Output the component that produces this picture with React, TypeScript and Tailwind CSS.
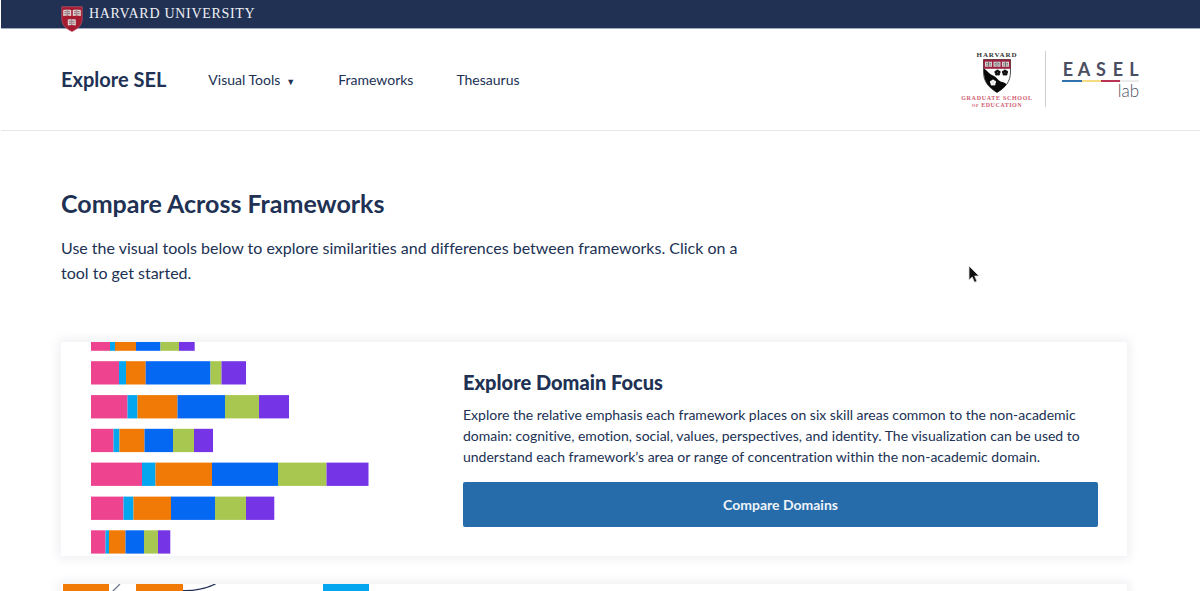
type Bar = { y: number; edges: number[] };

const SEGMENT_COLORS = ["#ee438f", "#05a6f0", "#f07a05", "#0568f3", "#a8c750", "#7535e6"];

const BARS: Bar[] = [
  { y: -14.5, edges: [30, 49, 54, 75, 99.5, 118, 133.7] },
  { y: 19.2, edges: [30, 58, 65, 84.7, 149.5, 160.5, 185] },
  { y: 53.1, edges: [30, 66.5, 76.5, 116.5, 164, 198, 228] },
  { y: 86.8, edges: [30, 52.5, 58.5, 83.5, 112, 133, 152] },
  { y: 120.6, edges: [30, 81, 94.5, 151, 217, 265.5, 307.5] },
  { y: 154.6, edges: [30, 62.5, 72.5, 110, 154, 185, 213.3] },
  { y: 188.3, edges: [30, 44.5, 48, 64.5, 83, 97, 109.3] },
];

function Shield() {
  return (
    <svg viewBox="0 0 22 26" className="h-[26px] w-[22px]" aria-hidden="true">
      <path d="M.8.8h20.4v12c0 6.500-4.500 10-10.200 12.800C5.300 22.800.8 19.300.8 12.800Z" fill="#a51c30" stroke="#c5566a" strokeWidth=".7" />
      {[[2.2, 3.5], [11.8, 3.5], [6.8, 13]].map(([x, y]) => (
        <g key={`${x}-${y}`} transform={`translate(${x} ${y})`}>
          <path d="M0 .5 4 0 8 .5v6L4 6 0 6.500Z" fill="#ddd3d5" />
          <path d="M1.200 2.200h2M1.200 4.200h2M4.800 2.200h2M4.800 4.200h2M4 0v6" stroke="#6b3942" strokeWidth=".7" />
        </g>
      ))}
    </svg>
  );
}

function Cinquefoil({ x, y, fill }: { x: number; y: number; fill: string }) {
  return (
    <g transform={`translate(${x} ${y})`} fill={fill}>
      <circle cx="0" cy="-1.600" r="1.500" />
      <circle cx="1.600" cy="-.4" r="1.500" />
      <circle cx="1" cy="1.400" r="1.500" />
      <circle cx="-1" cy="1.400" r="1.500" />
      <circle cx="-1.600" cy="-.4" r="1.500" />
    </g>
  );
}

function GraduateSchoolLogo() {
  return (
    <svg viewBox="0 0 72 60" className="h-[60px] w-[72px]" role="img" aria-label="Harvard Graduate School of Education">
      <text x="36" y="8" textAnchor="middle" fontFamily="Liberation Serif, serif" fontWeight="700" fontSize="7" letterSpacing=".9" fill="#333">HARVARD</text>
      <path d="M22.500 10.500h27V23c0 10-5.500 15.500-13.500 20.500C28 38.500 22.500 33 22.500 23Z" fill="#fff" stroke="#222" strokeWidth=".8" />
      <path d="M22.900 19.500C27 22 28 25 32 26.500S37 32 41 33s4 2 4.300 2.700c-2.300 3.300-5.500 5.600-9.300 7.800C28 38.500 22.900 33 22.900 23Z" fill="#080808" />
      <path d="M22.500 10.500h27v9.300h-27Z" fill="#9b2340" />
      {[24, 32.5, 41].map((x) => (
        <g key={x}>
          <path d={`M${x} 12.700h7v5h-7Z`} fill="#ddd6d8" />
          <path d={`M${x + 3.5} 12.700v5M${x + 1} 14.300h1.600M${x + 1} 16h1.600M${x + 4.5} 14.300h1.600M${x + 4.5} 16h1.600`} stroke="#444" strokeWidth=".7" />
        </g>
      ))}
      <Cinquefoil x={36.5} y={23.5} fill="#111" />
      <Cinquefoil x={44} y={23.5} fill="#111" />
      <Cinquefoil x={32} y={33.5} fill="#f1f1f1" />
      <text x="36" y="51" textAnchor="middle" fontFamily="Liberation Serif, serif" fontWeight="700" fontSize="6" letterSpacing=".7" fill="#cf5b70">GRADUATE SCHOOL</text>
      <text x="36" y="58" textAnchor="middle" fontFamily="Liberation Serif, serif" fontWeight="700" fontSize="6" letterSpacing=".5" fill="#cf5b70"><tspan fontSize="4.500">OF</tspan> EDUCATION</text>
    </svg>
  );
}

function EaselLogo() {
  return (
    <svg viewBox="0 0 78 48" className="h-12 w-[78px]" role="img" aria-label="EASEL lab">
      <g fontFamily="Lato, sans-serif" fontWeight="700" fontSize="18" fill="#4a4e61" textAnchor="middle">
        <text x="6" y="21">E</text>
        <text x="22" y="21">A</text>
        <text x="39" y="21">S</text>
        <text x="56" y="21">E</text>
        <text x="72" y="21">L</text>
      </g>
      <path d="M0 26h20" stroke="#2f70ae" strokeWidth="2" />
      <path d="M20 26h19" stroke="#f5dc82" strokeWidth="2" />
      <path d="M39 26h19" stroke="#b93352" strokeWidth="2" />
      <path d="M58 26h19" stroke="#e6e6e6" strokeWidth="1.500" />
      <text x="77" y="42" textAnchor="end" fontFamily="Lato, sans-serif" fontWeight="300" fontSize="17" fill="#4a4e61">lab</text>
    </svg>
  );
}

function DomainChart() {
  return (
    <svg viewBox="0 0 373 214" className="h-[214px] w-[373px] shrink-0" role="img" aria-label="Stacked bars of framework domains">
      {BARS.map((bar) => (
        <g key={bar.y}>
          {SEGMENT_COLORS.map((color, i) => (
            <rect key={color} x={bar.edges[i]} y={bar.y} width={bar.edges[i + 1] - bar.edges[i]} height="23.300" fill={color} />
          ))}
        </g>
      ))}
    </svg>
  );
}

function ConnectionsChart() {
  return (
    <svg viewBox="0 0 373 214" className="h-[214px] w-[373px] shrink-0" role="img" aria-label="Connected skills">
      <path d="M2 0h46v24H2ZM75 0h47v24H75Z" fill="#f07a05" />
      <path d="M262 0h46v24h-46Z" fill="#05a6f0" />
      <path d="M51 8 59 0" stroke="#6e7788" strokeWidth="1.300" />
      <path d="M122 6.700Q140 7 154.500 0" fill="none" stroke="#1f2d52" strokeWidth="1.300" />
    </svg>
  );
}

function Pointer() {
  return (
    <svg viewBox="0 0 12 19" className="absolute top-[265px] left-[968px] h-[19px] w-3" aria-hidden="true">
      <path d="M1 1v14l3.200-3 2.300 5.300 2.400-1L6.700 11H11Z" fill="#111" stroke="#ddd" strokeWidth=".8" />
    </svg>
  );
}

export default function App() {
  return (
    <div className="relative h-screen overflow-hidden bg-white font-['Lato',sans-serif] text-[#203154] [font-variant-ligatures:none]">
      <div className="ml-px h-7 bg-[#203154] px-[60px] shadow-[0_1px_0_#a3abc0]">
        <a href="#harvard" className="flex w-fit items-start gap-[6px] pt-[6px]">
          <Shield />
          <span className="font-['Liberation_Serif',serif] text-[14px] leading-4 tracking-wider text-[#eef0f4]">HARVARD UNIVERSITY</span>
        </a>
      </div>
      <header className="ml-px flex h-[103px] items-center justify-between border-b border-[#e4e6e8] px-[60px]">
        <div className="flex items-center">
          <a href="#home" className="text-[20px] leading-7 font-bold">Explore SEL</a>
          <nav className="ml-[42px] flex items-center gap-[43px] pt-[2px] text-[14px] leading-6">
            <button type="button" className="flex items-center gap-[6px]">
              Visual Tools <span className="pt-[3px] text-[9px] leading-4">▼</span>
            </button>
            <a href="#frameworks">Frameworks</a>
            <a href="#thesaurus">Thesaurus</a>
          </nav>
        </div>
        <div className="flex items-center">
          <a href="#gse"><GraduateSchoolLogo /></a>
          <div className="mr-4 ml-3 h-14 w-px bg-[#cdcfd3]" />
          <a href="#easel"><EaselLogo /></a>
        </div>
      </header>
      <main className="pr-[73px] pl-[61px]">
        <h1 className="pt-[54px] text-[25px] leading-9 font-bold">Compare Across Frameworks</h1>
        <p className="mt-[14px] max-w-[680px] text-[16px] leading-[25px]">
          Use the visual tools below to explore similarities and differences between frameworks. Click on a tool to get started.
        </p>
        <div className="mt-[57px] flex flex-col gap-7">
          <section className="flex bg-white shadow-[0_0_10px_3px_#eff0f3]">
            <DomainChart />
            <div className="min-w-0 flex-1 pt-[26px] pr-[29px] pl-[29px]">
              <h2 className="text-[20px] leading-7 font-black">Explore Domain Focus</h2>
              <p className="mt-[8px] text-[14px] leading-[21px]">
                Explore the relative emphasis each framework places on six skill areas common to the non-academic domain: cognitive, emotion, social, values, perspectives, and identity. The visualization can be used to understand each framework’s area or range of concentration within the non-academic domain.
              </p>
              <a href="#domains" className="mt-[15px] flex h-[45px] items-center justify-center rounded-xs bg-[#266cab] text-[14px] font-bold text-[#eef3f8]">
                Compare Domains
              </a>
            </div>
          </section>
          <section className="flex bg-white shadow-[0_0_10px_3px_#eff0f3]">
            <ConnectionsChart />
          </section>
        </div>
      </main>
      <Pointer />
    </div>
  );
}
